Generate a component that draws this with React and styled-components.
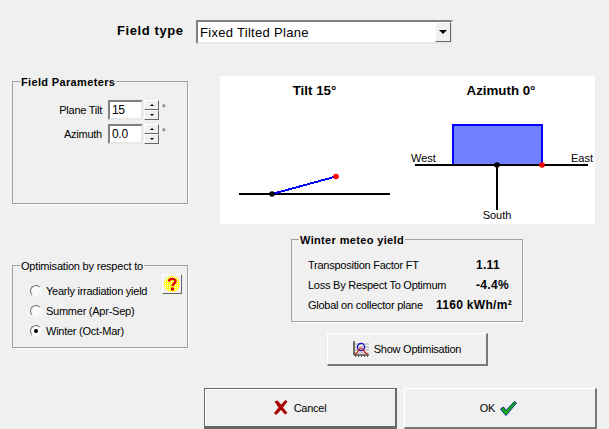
import React from "react";
import styled, { createGlobalStyle } from "styled-components";

const Global = createGlobalStyle`
  html, body { margin: 0; padding: 0; background: #f0f0f0; }
  body { font-family: "Liberation Sans", Arial, sans-serif; font-size: 11px; color: #000; }
  * { box-sizing: border-box; }
`;

const Page = styled.div`
  width: 609px; height: 429px; overflow: hidden; background: #f0f0f0;
  display: flex; flex-direction: column;
`;
const Header = styled.div`
  display: flex; align-items: center; margin-top: 20px; height: 24px; padding-left: 117px; gap: 12px;
`;
const FieldLabel = styled.label`
  font-weight: 700; font-size: 13px; letter-spacing: 0.6px; width: 67px; white-space: nowrap; margin-top: -3px;
`;
const Sunken = styled.div`
  background: #fff; border-style: solid; border-width: 2px;
  border-color: #808080 #e8e8e8 #e8e8e8 #808080;
  display: flex; align-items: center;
`;
const Select = styled(Sunken)`
  width: 257px; height: 24px; padding-left: 2px; font-size: 13px; letter-spacing: 0.3px;
  justify-content: space-between; padding-right: 0;
`;
const DropButton = styled.span`
  width: 16px; height: 20px; background: #f0f0f0; display: flex; align-items: center; justify-content: center;
  border-style: solid; border-width: 1px; border-color: #fff #666 #666 #fff;
  &::after { content: ""; border-style: solid; border-width: 4px 4px 0; border-color: #000 transparent transparent; }
`;
const Main = styled.div`
  display: grid; grid-template-columns: 176px 375px; column-gap: 32px; padding-left: 12px; margin-top: 32px;
`;
const LeftCol = styled.div`
  display: flex; flex-direction: column; gap: 61px; padding-top: 5px;
`;
const RightCol = styled.div`
  display: flex; flex-direction: column; align-items: flex-start;
`;
const Group = styled.section`
  position: relative; border: 1px solid #a0a0a0; box-shadow: 1px 1px 0 #fff;
  width: ${p => p.$w}px; height: ${p => p.$h}px;
`;
const Legend = styled.h3`
  position: absolute; left: 7px; top: -7px; margin: 0; padding: 0 1px; height: 14px; line-height: 14px;
  background: #f0f0f0; font-size: 11px; font-weight: ${p => (p.$bold ? 700 : 400)};
  letter-spacing: ${p => (p.$bold ? "0.35px" : "-0.2px")}; white-space: nowrap;
`;
const ParamList = styled.div`
  display: flex; flex-direction: column; gap: 4px; padding-top: 18px;
`;
const ParamRow = styled.div`
  display: grid; grid-template-columns: 95px 35px 16px auto; align-items: center;
`;
const ParamLabel = styled.span`
  font-size: 11px; letter-spacing: -0.25px; text-align: right; padding-right: 6px; white-space: nowrap;
`;
const ValueBox = styled(Sunken)`
  width: 35px; height: 20px; font-size: 12px; letter-spacing: -0.3px; padding-left: 2px;
`;
const Spin = styled.div`
  display: flex; flex-direction: column; height: 20px; margin-left: 1px; width: 15px;
`;
const SpinBtn = styled.span`
  flex: 1; background: #f0f0f0; display: flex; align-items: center; justify-content: center;
  border-style: solid; border-width: 1px; border-color: #fff #666 #666 #fff;
  &::after {
    content: ""; border-style: solid;
    border-width: ${p => (p.$up ? "0 2px 2px" : "2px 2px 0")};
    border-color: ${p => (p.$up ? "transparent transparent #000" : "#000 transparent transparent")};
  }
`;
const Deg = styled.span`
  font-size: 9px; padding-left: 3px; margin-top: -4px; line-height: 10px;
`;
const RadioList = styled.div`
  display: flex; flex-direction: column; padding: 15px 0 0 17px;
`;
const RadioRow = styled.label`
  display: flex; align-items: center; gap: 4px; height: 20px; font-size: 11px; letter-spacing: -0.25px; white-space: nowrap;
`;
const Radio = styled.input.attrs({ type: "radio" })`
  appearance: none; margin: 0; width: 12px; height: 12px; border-radius: 50%; background: #fafafa;
  border: 1px solid; border-color: #707070 #f4f4f4 #f4f4f4 #707070; display: flex; align-items: center; justify-content: center;
  &:checked::after { content: ""; width: 4px; height: 4px; border-radius: 50%; background: #000; }
`;
const HelpButton = styled.button`
  position: absolute; left: 149px; top: 8px; width: 20px; height: 20px; padding: 0; background: #f0f0f0;
  border-style: solid; border-width: 1px; border-color: #fff #666 #666 #fff; display: flex; align-items: center; justify-content: center;
`;
const Preview = styled.svg`
  display: block; width: 375px; height: 148px; background: #fff;
  text { font-family: "Liberation Sans", Arial, sans-serif; }
`;
const YieldGroup = styled(Group)`
  margin: 15px 0 0 71px;
`;
const YieldRows = styled.div`
  display: flex; flex-direction: column; padding: 15px 0 0 16px;
`;
const YieldRow = styled.div`
  display: grid; grid-template-columns: 128px auto; height: 20px; align-items: center;
  font-size: 11px; letter-spacing: -0.25px; white-space: nowrap;
`;
const YieldValue = styled.b`
  padding-left: ${p => p.$indent}px; letter-spacing: 0.3px; font-size: 12px;
`;
const Button = styled.button`
  font-family: "Liberation Sans", Arial, sans-serif; font-size: 11px; letter-spacing: -0.25px; color: #000; background: #f0f0f0; padding: 0;
  display: flex; align-items: center; justify-content: center;
  border-style: solid; border-color: #fff #777 #777 #fff; border-width: 1px 2px 2px 1px;
`;
const ShowButton = styled(Button)`
  width: 161px; height: 33px; margin: 11px 0 0 107px; gap: 5px;
`;
const Footer = styled.div`
  display: flex; gap: 7px; padding-left: 204px; margin-top: 22px;
`;
const BigButton = styled(Button)`
  width: 193px; height: 41px; gap: ${p => p.$gap}px; padding-right: ${p => p.$padRight || 0}px;
  ${p => p.$default && "border: 1px solid #696969; border-width: 1px 2px 3px 1px; box-shadow: inset 1px 1px 0 #fff;"}
`;

const HelpIcon = () => (
  <svg width="18" height="18" viewBox="0 0 18 18">
    <defs>
      <pattern id="dither" width="2" height="2" patternUnits="userSpaceOnUse">
        <rect width="2" height="2" fill="#ffff00" />
        <rect width="1" height="1" fill="#fff" />
      </pattern>
    </defs>
    <circle cx="9" cy="9" r="8" fill="url(#dither)" />
    <path d="M6 6.5C6 3 12.5 3 12.5 6.5C12.5 8.5 9.5 8.5 9.5 11" fill="none" stroke="#e00000" strokeWidth="2.4" />
    <rect x="8" y="12.5" width="3" height="3" fill="#e00000" />
  </svg>
);
const ChartIcon = () => (
  <svg width="16" height="16" viewBox="0 0 16 16">
    <path d="M0 3H16M0 6H16M0 9H16M0 12H16" stroke="#aaa" strokeWidth="1" />
    <path d="M1 0V14H16" fill="none" stroke="#000" strokeWidth="1" />
    <path d="M2.5 14V16M5.5 14V16M8.5 14V16M11.5 14V16M14.5 14V16" stroke="#555" />
    <circle cx="8" cy="6" r="3.6" fill="none" stroke="#1010d0" strokeWidth="1.3" />
    <path d="M2 13C5 13 5.5 7 8 7C10.5 7 11 13 15 13" fill="none" stroke="#e01010" strokeWidth="1.2" />
  </svg>
);
const CrossIcon = () => (
  <svg width="14" height="15" viewBox="0 0 14 15">
    <path d="M0.5 1.5L3.5 0.5L7 4.5L11.5 0L13.5 1.5L9 7.5L13.5 13L11 14.5L7 10L2 15L0 13L4.5 7.5Z" fill="#a80000" />
  </svg>
);
const CheckIcon = () => (
  <svg width="17" height="15" viewBox="0 0 17 15">
    <path d="M0.5 8L3.5 6L6 9.5L14.5 0.5L16.5 2L6 14.5Z" fill="#10b010" stroke="#0a2a80" strokeWidth="1" />
  </svg>
);

const Diagram = () => (
  <Preview viewBox="0 0 375 148">
    <text x="94.5" y="19" fontSize="13.3" fontWeight="700" textAnchor="middle">Tilt 15°</text>
    <text x="281" y="19" fontSize="13.3" fontWeight="700" textAnchor="middle">Azimuth 0°</text>
    <path d="M19 118H170" stroke="#000" strokeWidth="2" />
    <path d="M52 118L116 100.5" stroke="#0000ff" strokeWidth="2" shapeRendering="crispEdges" />
    <circle cx="52" cy="118" r="2.8" fill="#000" />
    <circle cx="116" cy="100.5" r="2.8" fill="#ff0000" />
    <rect x="233" y="49" width="89" height="40" fill="#7080ff" stroke="#0000ff" strokeWidth="2" />
    <path d="M195 89H368M277 89V134" stroke="#000" strokeWidth="2" />
    <circle cx="277" cy="89" r="2.8" fill="#000" />
    <circle cx="322" cy="89" r="2.8" fill="#ff0000" />
    <text x="191" y="86" fontSize="11">West</text>
    <text x="351" y="86" fontSize="11">East</text>
    <text x="277" y="143" fontSize="11" textAnchor="middle">South</text>
  </Preview>
);

const Param = ({ label, value }) => (
  <ParamRow>
    <ParamLabel>{label}</ParamLabel>
    <ValueBox>{value}</ValueBox>
    <Spin><SpinBtn $up /><SpinBtn /></Spin>
    <Deg>°</Deg>
  </ParamRow>
);

const options = [
  ["Yearly irradiation yield", false],
  ["Summer (Apr-Sep)", false],
  ["Winter (Oct-Mar)", true],
];

export default function App() {
  return (
    <Page>
      <Global />
      <Header>
        <FieldLabel>Field type</FieldLabel>
        <Select>Fixed Tilted Plane<DropButton /></Select>
      </Header>
      <Main>
        <LeftCol>
          <Group $w={176} $h={123}>
            <Legend $bold>Field Parameters</Legend>
            <ParamList>
              <Param label="Plane Tilt" value="15" />
              <Param label="Azimuth" value="0.0" />
            </ParamList>
          </Group>
          <Group $w={176} $h={83}>
            <Legend>Optimisation by respect to</Legend>
            <RadioList>
              {options.map(([t, c]) => (
                <RadioRow key={t}><Radio name="opt" defaultChecked={c} />{t}</RadioRow>
              ))}
            </RadioList>
            <HelpButton><HelpIcon /></HelpButton>
          </Group>
        </LeftCol>
        <RightCol>
          <Diagram />
          <YieldGroup $w={232} $h={83}>
            <Legend $bold>Winter meteo yield</Legend>
            <YieldRows>
              <YieldRow>Transposition Factor FT<YieldValue $indent={40}>1.11</YieldValue></YieldRow>
              <YieldRow>Loss By Respect To Optimum<YieldValue $indent={40}>-4.4%</YieldValue></YieldRow>
              <YieldRow>Global on collector plane<YieldValue $indent={0}>1160 kWh/m²</YieldValue></YieldRow>
            </YieldRows>
          </YieldGroup>
          <ShowButton><ChartIcon />Show Optimisation</ShowButton>
        </RightCol>
      </Main>
      <Footer>
        <BigButton $default $gap={6}><CrossIcon />Cancel</BigButton>
        <BigButton $gap={5} $padRight={3}>OK<CheckIcon /></BigButton>
      </Footer>
    </Page>
  );
}
